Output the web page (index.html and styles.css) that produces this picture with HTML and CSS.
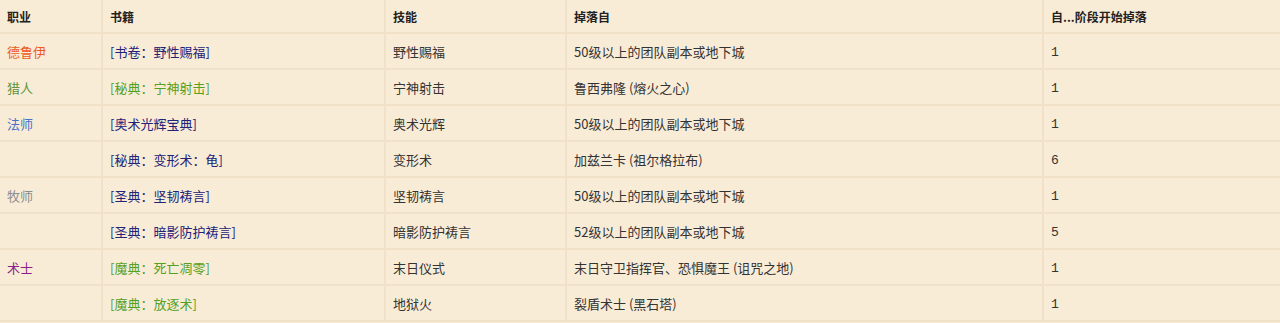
FILE: index.html
```html
<!DOCTYPE html>
<html lang="zh">
<head>
<meta charset="utf-8">
<link rel="stylesheet" href="styles.css">
</head>
<body>
<table class="loot">
  <colgroup>
    <col class="c1"><col class="c2"><col class="c3"><col class="c4"><col class="c5">
  </colgroup>
  <thead>
    <tr><th>职业</th><th>书籍</th><th>技能</th><th>掉落自</th><th>自...阶段开始掉落</th></tr>
  </thead>
  <tbody>
    <tr><td class="druid">德鲁伊</td><td class="book blue">[书卷：野性赐福]</td><td>野性赐福</td><td>50级以上的团队副本或地下城</td><td class="num">1</td></tr>
    <tr><td class="hunter">猎人</td><td class="book green">[秘典：宁神射击]</td><td>宁神射击</td><td>鲁西弗隆 (熔火之心)</td><td class="num">1</td></tr>
    <tr><td class="mage">法师</td><td class="book blue">[奥术光辉宝典]</td><td>奥术光辉</td><td>50级以上的团队副本或地下城</td><td class="num">1</td></tr>
    <tr><td></td><td class="book blue">[秘典：变形术：龟]</td><td>变形术</td><td>加兹兰卡 (祖尔格拉布)</td><td class="num">6</td></tr>
    <tr><td class="priest">牧师</td><td class="book blue">[圣典：坚韧祷言]</td><td>坚韧祷言</td><td>50级以上的团队副本或地下城</td><td class="num">1</td></tr>
    <tr><td></td><td class="book blue">[圣典：暗影防护祷言]</td><td>暗影防护祷言</td><td>52级以上的团队副本或地下城</td><td class="num">5</td></tr>
    <tr><td class="warlock">术士</td><td class="book green">[魔典：死亡凋零]</td><td>末日仪式</td><td>末日守卫指挥官、恐惧魔王 (诅咒之地)</td><td class="num">1</td></tr>
    <tr><td></td><td class="book green">[魔典：放逐术]</td><td>地狱火</td><td>裂盾术士 (黑石塔)</td><td class="num">1</td></tr>
  </tbody>
</table>
</body>
</html>
```
FILE: styles.css
```css
html, body {
  margin: 0;
  padding: 0;
  background: #f9ecd7;
}
body {
  font-family: "Noto Sans CJK SC", "Microsoft YaHei", "Liberation Sans", sans-serif;
  font-size: 13px;
  color: #333;
}
.loot {
  width: 1280px;
  border-collapse: collapse;
  table-layout: fixed;
  background: #f9ecd7;
}
.c1 { width: 102px; }
.c2 { width: 283px; }
.c3 { width: 181px; }
.c4 { width: 477px; }
.c5 { width: 237px; }
.loot th, .loot td {
  text-align: left;
  padding: 0 7px;
  border: 2px solid #f0e1c8;
  border-top: none;
  line-height: 17px;
  white-space: nowrap;
}
.loot tr > :first-child { border-left: none; }
.loot tr > :last-child { border-right: none; }
.loot th {
  height: 32px;
  font-size: 12px;
  font-weight: bold;
  color: #222;
  vertical-align: middle;
}
.loot td {
  height: 34px;
  vertical-align: middle;
}
.loot td.num {
  font-family: "Liberation Mono", "DejaVu Sans Mono", monospace;
  font-size: 13px;
  padding-top: 2px;
  height: 32px;
}
.druid { color: #ee5a24; }
.hunter { color: #5d9540; }
.mage { color: #4a71c9; }
.priest { color: #8c8c8c; }
.warlock { color: #8a1f8a; }
.book.blue { color: #222277; }
.book.green { color: #54a022; }
.book { padding-left: 8px; }
```
